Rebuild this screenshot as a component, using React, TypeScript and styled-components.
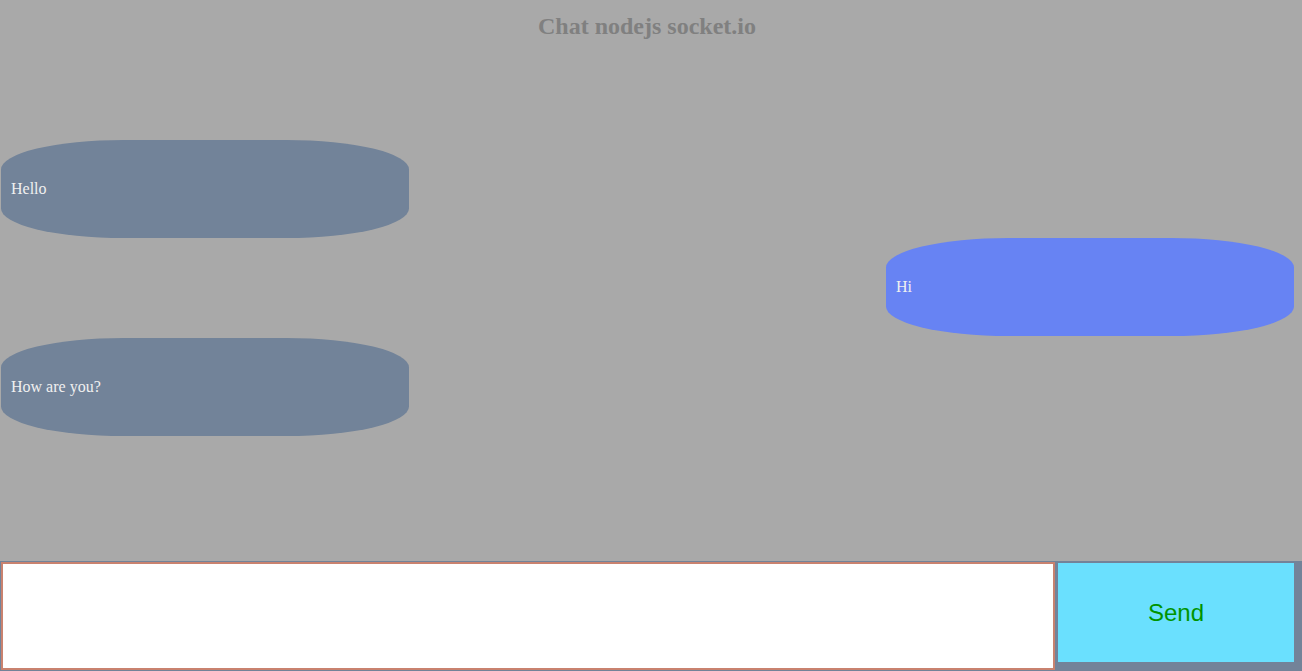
import React from "react";
import styled, { createGlobalStyle } from "styled-components";

const Global = createGlobalStyle`
  html, body { margin: 0; padding: 0; }
  body { background: #a9a9a9; font-family: "Liberation Serif", serif; }
`;

const Page = styled.div`
  height: 100vh;
  display: flex;
  flex-direction: column;
  overflow: hidden;
`;

const Title = styled.h2`
  margin: 0;
  padding: 10px 8px 0 0;
  height: 34px;
  text-align: center;
  font-family: "Liberation Serif", serif;
  font-weight: bold;
  font-size: 24px;
  line-height: 32px;
  color: #808080;
`;

const Messages = styled.ul`
  flex: 1;
  list-style: none;
  margin: 0;
  padding: 96px 0 0 0;
  display: flex;
  flex-direction: column;
`;

const Bubble = styled.li<{ $mine?: boolean }>`
  width: 408px;
  height: 98px;
  box-sizing: border-box;
  margin-bottom: ${(p) => (p.$mine ? "2px" : "0")};
  align-self: ${(p) => (p.$mine ? "flex-end" : "flex-start")};
  margin-left: ${(p) => (p.$mine ? "0" : "1px")};
  margin-right: ${(p) => (p.$mine ? "8px" : "0")};
  background: ${(p) => (p.$mine ? "#6783f3" : "#728399")};
  border-radius: 30%;
  display: flex;
  align-items: center;
  padding-left: 10px;
  color: #f0f0f0;
  font-size: 16px;
  font-family: "Liberation Serif", serif;
`;

const Form = styled.form`
  height: 110px;
  box-sizing: border-box;
  background: #738399;
  display: flex;
  align-items: flex-start;
  padding: 1px 8px 0 1px;
  gap: 3px;
`;

const Input = styled.input`
  flex: 1;
  height: 108px;
  box-sizing: border-box;
  border: 2px solid #c9826f;
  background: #fff;
  margin: 0;
  padding: 0 2px;
  font-size: 16px;
  outline: none;
`;

const SendButton = styled.button`
  width: 236px;
  height: 99px;
  margin-top: 1px;
  border: none;
  background: #6ae0fe;
  color: #009400;
  font-family: "Liberation Sans", Arial, sans-serif;
  font-size: 24px;
  padding: 0;
  cursor: pointer;
`;

const messages = [
  { text: "Hello", mine: false },
  { text: "Hi", mine: true },
  { text: "How are you?", mine: false },
];

export default function App() {
  return (
    <Page>
      <Global />
      <Title>Chat nodejs socket.io</Title>
      <Messages>
        {messages.map((m, i) => (
          <Bubble key={i} $mine={m.mine}>
            {m.text}
          </Bubble>
        ))}
      </Messages>
      <Form onSubmit={(e) => e.preventDefault()}>
        <Input autoFocus />
        <SendButton type="submit">Send</SendButton>
      </Form>
    </Page>
  );
}
